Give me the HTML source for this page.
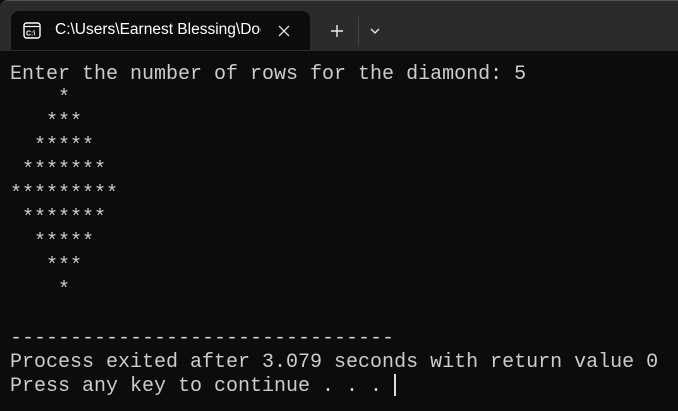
<!DOCTYPE html>
<html><head><style>
body{margin:0;width:678px;height:411px;overflow:hidden;background:#0c0c0c;}
.bar{position:absolute;left:0;top:0;width:678px;height:50px;background:#2b2b2b;border-top-left-radius:8px;border-top:1px solid #555;}
.tab{position:absolute;left:11px;top:11px;width:299px;height:39px;background:#0c0c0c;border-radius:8px 8px 0 0;}
.title{position:absolute;left:44px;top:10px;color:#fff;font:15.5px "Liberation Sans",sans-serif;white-space:nowrap;width:206px;overflow:hidden;}
pre{position:absolute;left:10px;top:63px;margin:0;font:20px/24px "Liberation Mono",monospace;color:#cccccc;}
.cur{position:absolute;left:394px;top:374px;width:2px;height:22px;background:#ddd;}
</style></head><body>
<div class="bar"></div>
<div class="tab">
<svg style="position:absolute;left:12px;top:11px" width="18" height="17" viewBox="0 0 18 17"><rect x="1" y="1" width="16" height="15" rx="2.5" fill="none" stroke="#fff" stroke-width="1.4"/><line x1="1" y1="4.5" x2="17" y2="4.5" stroke="#fff" stroke-width="1.2"/><text x="3" y="13.5" font-family="Liberation Sans" font-size="7" font-weight="bold" fill="#fff">C:\</text></svg>
<div class="title">C:\Users\Earnest Blessing\Documents</div>
<svg style="position:absolute;left:267px;top:14px" width="12" height="12"><path d="M1 1L11 11M11 1L1 11" stroke="#ddd" stroke-width="1.3"/></svg>
</div>
<svg style="position:absolute;left:330px;top:24px" width="14" height="14"><path d="M7 1V13M1 7H13" stroke="#eee" stroke-width="1.4"/></svg>
<div style="position:absolute;left:358px;top:17px;width:1px;height:28px;background:#444"></div>
<svg style="position:absolute;left:370px;top:28px" width="10" height="6"><path d="M1 1L5 5L9 1" stroke="#eee" stroke-width="1.3" fill="none"/></svg>
<pre>Enter the number of rows for the diamond: 5
    *
   ***
  *****
 *******
*********
 *******
  *****
   ***
    *

--------------------------------
Process exited after 3.079 seconds with return value 0
Press any key to continue . . . </pre>
<div class="cur"></div>
</body></html>
